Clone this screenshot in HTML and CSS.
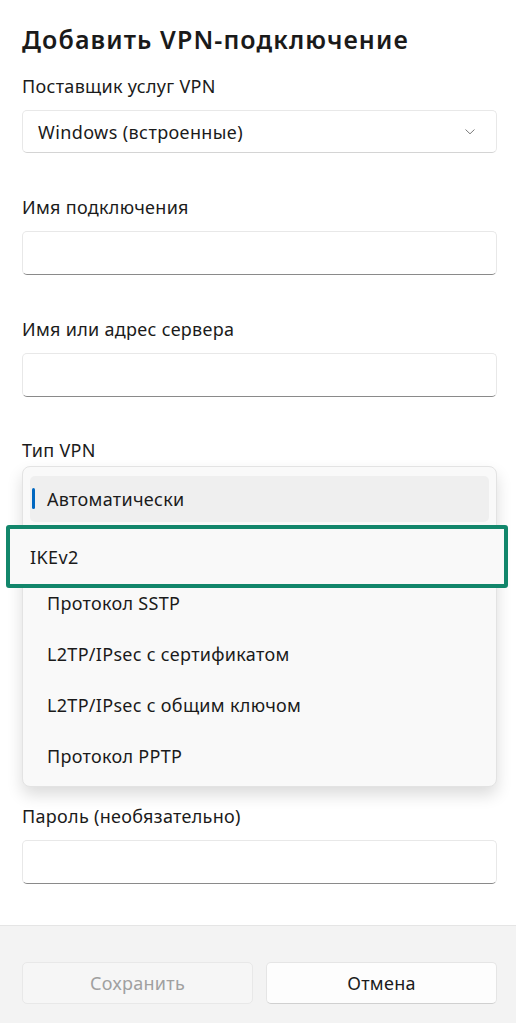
FILE: index.html
```html
<!DOCTYPE html>
<html lang="ru">
<head>
<meta charset="utf-8">
<title>Добавить VPN-подключение</title>
<link rel="stylesheet" href="styles.css">
</head>
<body>
<div class="dialog">
  <main class="content">
    <h1 class="title">Добавить VPN-подключение</h1>

    <div class="field">
      <div class="label">Поставщик услуг VPN</div>
      <div class="select">
        <span>Windows (встроенные)</span>
        <svg class="chevron" width="10" height="6" viewBox="0 0 10 6"><path d="M0.8 0.8 L5 4.8 L9.2 0.8" fill="none" stroke="#7a7a7a" stroke-width="1" stroke-linecap="round" stroke-linejoin="round"/></svg>
      </div>
    </div>

    <div class="field">
      <div class="label">Имя подключения</div>
      <div class="input"></div>
    </div>

    <div class="field">
      <div class="label">Имя или адрес сервера</div>
      <div class="input"></div>
    </div>

    <div class="field field-type">
      <div class="label">Тип VPN</div>
      <div class="menu">
        <div class="item selected"><span class="indicator"></span>Автоматически</div>
        <div class="item highlight">IKEv2</div>
        <div class="item">Протокол SSTP</div>
        <div class="item">L2TP/IPsec с сертификатом</div>
        <div class="item">L2TP/IPsec с общим ключом</div>
        <div class="item">Протокол PPTP</div>
      </div>
    </div>

    <div class="field field-last">
      <div class="label">Пароль (необязательно)</div>
      <div class="input"></div>
    </div>
  </main>

  <footer class="footer">
    <button class="btn btn-disabled" type="button">Сохранить</button>
    <button class="btn" type="button">Отмена</button>
  </footer>
</div>
</body>
</html>
```

FILE: styles.css
```css
* { box-sizing: border-box; }

html, body {
  margin: 0;
  padding: 0;
  background: #ffffff;
}

body {
  font-family: "Noto Sans", "Open Sans", sans-serif;
  color: #1b1b1b;
  font-size: 18px;
  letter-spacing: 0.3px;
}

.dialog {
  display: flex;
  flex-direction: column;
  min-height: 100vh;
}

.content {
  padding: 24px 19px 0 22px;
}

.title {
  margin: 0 0 20px 0;
  font-size: 25px;
  line-height: 30px;
  font-weight: 600;
  letter-spacing: 1.1px;
  color: #1a1a1a;
}

.field {
  margin-bottom: 42px;
}

.label {
  font-size: 18px;
  line-height: 24px;
  margin-bottom: 12px;
}

.select,
.input {
  background: #ffffff;
  border: 1px solid #e8e8e8;
  border-radius: 5px;
}

.select {
  height: 43px;
  display: flex;
  align-items: center;
  justify-content: space-between;
  padding: 0 21px 0 15px;
  border-bottom-color: #d4d4d4;
  font-size: 18px;
  letter-spacing: 0.4px;
}

.chevron {
  display: block;
}

.input {
  height: 44px;
  border-bottom: 1px solid #8a8a8a;
}

.field-type {
  margin-top: -1px;
  margin-bottom: 17px;
}

.field-type .label {
  margin-bottom: 4px;
}

.menu {
  background: #f9f9f9;
  border: 1px solid #e3e3e3;
  border-radius: 8px;
  box-shadow: 0 8px 16px rgba(0, 0, 0, 0.14);
  padding: 9px 7px 7px 7px;
}

.item {
  position: relative;
  height: 46px;
  margin-bottom: 5px;
  display: flex;
  align-items: center;
  padding-left: 17px;
  border-radius: 5px;
  font-size: 18px;
  color: #1b1b1b;
}

.item:last-child {
  margin-bottom: 0;
}

.item.selected {
  background: #efefef;
  margin-bottom: 3px;
}

.indicator {
  position: absolute;
  left: 2px;
  top: 12px;
  width: 3px;
  height: 21px;
  border-radius: 2px;
  background: #0067c0;
}

.highlight {
  z-index: 1;
  height: 63px;
  margin: 0 -19px -8px -24px;
  padding-left: 20px;
  border: 4px solid #12866b;
  border-radius: 3px;
  background: #f9f9f9;
  font-size: 18px;
  letter-spacing: 0.4px;
}

.field-last {
  margin-bottom: 41px;
}

.footer {
  flex: 1;
  background: #f3f3f3;
  border-top: 1px solid #e5e5e5;
  padding: 36px 19px 0 22px;
  display: grid;
  grid-template-columns: 1fr 1fr;
  column-gap: 13px;
  align-content: start;
}

.btn {
  height: 42px;
  border-radius: 5px;
  border: 1px solid #e5e5e5;
  border-bottom-color: #d0d0d0;
  background: #fdfdfd;
  font-family: inherit;
  font-size: 18px;
  letter-spacing: 0.3px;
  color: #1b1b1b;
  padding: 0;
}

.btn-disabled {
  background: #f6f6f6;
  border-color: #e8e8e8;
  color: #a0a0a0;
}
```
